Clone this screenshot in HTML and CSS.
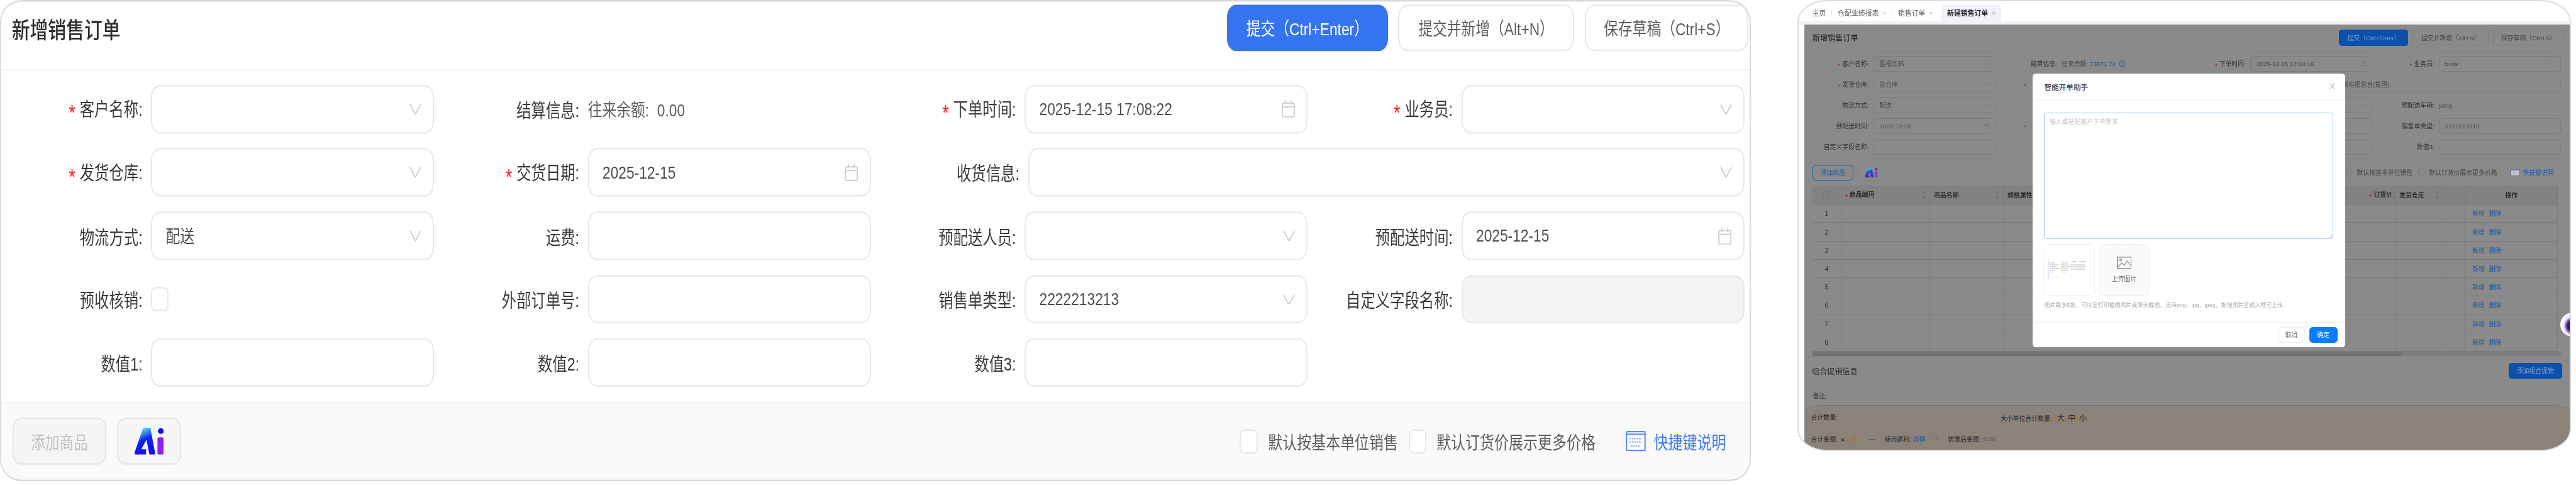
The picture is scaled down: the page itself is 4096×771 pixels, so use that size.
FILE: index.html
```html
<!DOCTYPE html>
<html lang="zh-CN">
<head>
<meta charset="utf-8">
<title>新增销售订单</title>
<link rel="stylesheet" href="styles.css">
</head>
<body>
<svg class="defs" width="0" height="0" aria-hidden="true">
  <defs>
    <symbol id="chev" viewBox="0 0 25 23" preserveAspectRatio="none"><path d="M1 1 12.5 22 24 1"/></symbol>
    <symbol id="cal" viewBox="0 0 28 38" preserveAspectRatio="none"><rect x="1.5" y="7" width="25" height="29" rx="2"/><path d="M1.5 15h25M8 1v9M20 1v9"/></symbol>
    <linearGradient id="aiA" x1="0.45" y1="0" x2="0.7" y2="0.75"><stop offset="0" stop-color="#56dcf2"/><stop offset="0.55" stop-color="#0a22f2"/><stop offset="1" stop-color="#1a12ee"/></linearGradient>
    <symbol id="ai" viewBox="0 0 61 57" preserveAspectRatio="none">
      <path fill="url(#aiA)" d="M18 0h15l10 53q.5 4-3 4h-6q-3 0-3.500-3L25 25 14 45h10v12H4q-4 0-4-4 0-2 1-4z"/>
      <circle cx="55" cy="7" r="6" fill="#1500f0"/>
      <rect x="48" y="20" width="13" height="37" rx="4" fill="#8a1ff0"/>
    </symbol>
    <symbol id="kbd" viewBox="0 0 42 42" preserveAspectRatio="none">
      <rect x="1.500" y="1.500" width="39" height="39" rx="2" fill="#fff" stroke="currentColor" stroke-width="3"/>
      <path d="M2 7h38" stroke="currentColor" stroke-width="3"/>
      <path d="M8 16h26M8 23h26M11 31h20" stroke="currentColor" stroke-width="3" stroke-dasharray="3 2" opacity=".75"/>
    </symbol>
    <symbol id="pic" viewBox="0 0 31 26"><rect x="1" y="1" width="29" height="24" fill="none" stroke="currentColor" stroke-width="2"/><circle cx="8" cy="7" r="2.200" fill="none" stroke="currentColor" stroke-width="1.500"/><path d="M2 22 10 13l5 5 7-9 8 10" fill="none" stroke="currentColor" stroke-width="1.500"/></symbol>
    <symbol id="sort" viewBox="0 0 8 18"><path d="M4 1 7 6H1zM4 17 1 12h6z" fill="currentColor"/></symbol>
  </defs>
</svg>

<div class="stage">

  <section class="panel">
    <header class="p-head">
      <h1 class="p-title">新增销售订单</h1>
      <div class="p-actions">
        <button class="btn btn-primary b1">提交（Ctrl+Enter）</button>
        <button class="btn b2">提交并新增（Alt+N）</button>
        <button class="btn b3">保存草稿（Ctrl+S）</button>
      </div>
    </header>

    <div class="p-form">
      <div class="field"><span class="label"><i class="req">*</i>客户名称:</span><div class="ctl"><svg class="chev"><use href="#chev"/></svg></div></div>
      <div class="field"><span class="label">结算信息:</span><span class="plain">往来余额:&nbsp; 0.00</span></div>
      <div class="field"><span class="label"><i class="req">*</i>下单时间:</span><div class="ctl"><span>2025-12-15 17:08:22</span><svg class="cal"><use href="#cal"/></svg></div></div>
      <div class="field"><span class="label"><i class="req">*</i>业务员:</span><div class="ctl"><svg class="chev"><use href="#chev"/></svg></div></div>

      <div class="field"><span class="label"><i class="req">*</i>发货仓库:</span><div class="ctl"><svg class="chev"><use href="#chev"/></svg></div></div>
      <div class="field"><span class="label"><i class="req">*</i>交货日期:</span><div class="ctl"><span>2025-12-15</span><svg class="cal"><use href="#cal"/></svg></div></div>
      <div class="field wide"><span class="label">收货信息:</span><div class="ctl"><svg class="chev"><use href="#chev"/></svg></div></div>

      <div class="field"><span class="label">物流方式:</span><div class="ctl"><span>配送</span><svg class="chev"><use href="#chev"/></svg></div></div>
      <div class="field"><span class="label">运费:</span><div class="ctl"></div></div>
      <div class="field"><span class="label">预配送人员:</span><div class="ctl"><svg class="chev"><use href="#chev"/></svg></div></div>
      <div class="field"><span class="label">预配送时间:</span><div class="ctl"><span>2025-12-15</span><svg class="cal"><use href="#cal"/></svg></div></div>

      <div class="field"><span class="label">预收核销:</span><span class="check"></span></div>
      <div class="field"><span class="label">外部订单号:</span><div class="ctl"></div></div>
      <div class="field"><span class="label">销售单类型:</span><div class="ctl"><span>2222213213</span><svg class="chev"><use href="#chev"/></svg></div></div>
      <div class="field"><span class="label">自定义字段名称:</span><div class="ctl off"></div></div>

      <div class="field"><span class="label">数值1:</span><div class="ctl"></div></div>
      <div class="field"><span class="label">数值2:</span><div class="ctl"></div></div>
      <div class="field"><span class="label">数值3:</span><div class="ctl"></div></div>
    </div>

    <footer class="p-foot">
      <button class="tool add" disabled>添加商品</button>
      <button class="tool ai"><svg class="ai-mark"><use href="#ai"/></svg></button>
      <div class="opts">
        <span class="check"></span><span class="opt o1">默认按基本单位销售</span>
        <span class="check"></span><span class="opt o2">默认订货价展示更多价格</span>
        <svg class="kbd"><use href="#kbd"/></svg><a class="keys">快捷键说明</a>
      </div>
    </footer>
  </section>

  <section class="shot">
    <nav class="tabs">
      <span class="tab t-home">主页</span><span class="tab-sep"></span>
      <span class="tab">仓配业绩报表<em>×</em></span><span class="tab-sep"></span>
      <span class="tab">销售订单<em>×</em></span>
      <span class="tab on">新建销售订单<em>×</em></span>
    </nav>
    <div class="tab-gap"></div>

    <div class="main">
      <header class="m-head">
        <h2>新增销售订单</h2>
        <div class="m-actions">
          <button class="mbtn prim">提交（Ctrl+Enter）</button>
          <button class="mbtn w2">提交并新增（Alt+N）</button>
          <button class="mbtn w3">保存草稿（Ctrl+S）</button>
        </div>
      </header>

      <div class="m-form">
        <div class="mf"><span class="ml"><i class="mreq">*</i>客户名称:</span><div class="mc"><span>葛根饮料</span><svg class="mchev"><use href="#chev"/></svg></div></div>
        <div class="mf"><span class="ml">结算信息:</span><span class="mplain">往来余额:&nbsp;<b class="mlink">73871.74</b><svg class="minfo" viewBox="0 0 14 14"><circle cx="7" cy="7" r="6" fill="none" stroke="currentColor" stroke-width="1.300"/><path d="M7 3.500v1.200M7 6v4.500" stroke="currentColor" stroke-width="1.300"/></svg></span></div>
        <div class="mf"><span class="ml"><i class="mreq">*</i>下单时间:</span><div class="mc"><span>2025-12-15 17:04:16</span><svg class="mcal"><use href="#cal"/></svg></div></div>
        <div class="mf"><span class="ml"><i class="mreq">*</i>业务员:</span><div class="mc"><span>boss</span><svg class="mchev"><use href="#chev"/></svg></div></div>

        <div class="mf"><span class="ml"><i class="mreq">*</i>发货仓库:</span><div class="mc"><span>总仓库</span><svg class="mchev"><use href="#chev"/></svg></div></div>
        <div class="mf"><span class="ml ml-star"><i class="mreq">*</i></span><div class="mc"></div></div>
        <div class="mf mwide"><span class="ml">收货信息:</span><div class="mc"><span>北京市朝阳区光华路1号中央广播电视总台(集团)</span><svg class="mchev"><use href="#chev"/></svg></div></div>

        <div class="mf"><span class="ml">物流方式:</span><div class="mc"><span>配送</span><svg class="mchev"><use href="#chev"/></svg></div></div>
        <div class="mf"><span class="ml"></span><div class="mc"></div></div>
        <div class="mf"><span class="ml">预配送人员:</span><div class="mc"><svg class="mchev"><use href="#chev"/></svg></div></div>
        <div class="mf"><span class="ml">预配送车辆:</span><span class="mplain">yang</span></div>

        <div class="mf"><span class="ml">预配送时间:</span><div class="mc"><span>2025-12-15</span><svg class="mcal"><use href="#cal"/></svg></div></div>
        <div class="mf"><span class="ml ml-star"><i class="mreq">*</i></span><div class="mc"></div></div>
        <div class="mf"><span class="ml">外部订单号:</span><div class="mc"></div></div>
        <div class="mf"><span class="ml">销售单类型:</span><div class="mc"><span>2222213213</span><svg class="mchev"><use href="#chev"/></svg></div></div>

        <div class="mf"><span class="ml">自定义字段名称:</span><div class="mc"></div></div>
        <div class="mf"><span class="ml"></span><div class="mc"></div></div>
        <div class="mf"><span class="ml">数值2:</span><div class="mc"></div></div>
        <div class="mf"><span class="ml">数值3:</span><div class="mc"></div></div>
      </div>

      <div class="m-tools">
        <button class="madd">添加商品</button>
        <button class="mai"><svg class="mai-mark"><use href="#ai"/></svg></button>
        <div class="mopts">
          <span class="mcheck"></span><span class="mo o3">默认按基本单位销售</span>
          <span class="mcheck"></span><span class="mo o4">默认订货价展示更多价格</span>
          <svg class="mkbd"><use href="#kbd"/></svg><a class="mkeys">快捷键说明</a>
        </div>
      </div>

      <table class="grid">
        <colgroup>
          <col class="w60"><col class="w186"><col class="w154"><col class="w104"><col class="w102"><col class="w105"><col class="w101"><col class="w101"><col class="w123"><col class="w185"><col class="w100"><col class="w47"><col class="w193">
        </colgroup>
        <thead>
          <tr>
            <th class="num"><svg class="gear" viewBox="0 0 16 22"><path d="M8 1 15 5v12l-7 4-7-4V5z" fill="none" stroke="currentColor" stroke-width="1.400"/><circle cx="8" cy="11" r="3" fill="none" stroke="currentColor" stroke-width="1.400"/></svg></th>
            <th><span class="th"><span><i class="mreq">*</i>商品编码</span><svg class="sort"><use href="#sort"/></svg></span></th>
            <th><span class="th"><span>商品名称</span><svg class="sort"><use href="#sort"/></svg></span></th>
            <th><span class="th"><span>规格属性</span></span></th>
            <th></th><th></th><th></th><th></th><th></th>
            <th class="r"><span class="th"><span><i class="mreq">*</i>订货价</span><svg class="sort"><use href="#sort"/></svg></span></th>
            <th><span class="th"><span>发货仓库</span><svg class="sort"><use href="#sort"/></svg></span></th>
            <th class="fx-l"></th>
            <th class="fx center">操作</th>
          </tr>
        </thead>
        <tbody>
          <tr><td class="num">1</td><td></td><td></td><td></td><td></td><td></td><td></td><td></td><td></td><td></td><td></td><td></td><td class="fx ops"><a>新增</a><a>删除</a></td></tr>
          <tr><td class="num">2</td><td></td><td></td><td></td><td></td><td></td><td></td><td></td><td></td><td></td><td></td><td></td><td class="fx ops"><a>新增</a><a>删除</a></td></tr>
          <tr><td class="num">3</td><td></td><td></td><td></td><td></td><td></td><td></td><td></td><td></td><td></td><td></td><td></td><td class="fx ops"><a>新增</a><a>删除</a></td></tr>
          <tr><td class="num">4</td><td></td><td></td><td></td><td></td><td></td><td></td><td></td><td></td><td></td><td></td><td></td><td class="fx ops"><a>新增</a><a>删除</a></td></tr>
          <tr><td class="num">5</td><td></td><td></td><td></td><td></td><td></td><td></td><td></td><td></td><td></td><td></td><td></td><td class="fx ops"><a>新增</a><a>删除</a></td></tr>
          <tr><td class="num">6</td><td></td><td></td><td></td><td></td><td></td><td></td><td></td><td></td><td></td><td></td><td></td><td class="fx ops"><a>新增</a><a>删除</a></td></tr>
          <tr><td class="num">7</td><td></td><td></td><td></td><td></td><td></td><td></td><td></td><td></td><td></td><td></td><td></td><td class="fx ops"><a>新增</a><a>删除</a></td></tr>
          <tr><td class="num">8</td><td></td><td></td><td></td><td></td><td></td><td></td><td></td><td></td><td></td><td></td><td></td><td class="fx ops"><a>新增</a><a>删除</a></td></tr>
        </tbody>
      </table>
      <div class="hscroll"><div class="hthumb"></div></div>

      <div class="promo">
        <div class="promo-row"><h3>组合促销信息</h3><button class="mbtn prim pw">添加组合促销</button></div>
        <div class="remark">备注:</div>
        <div class="remark-box"></div>
      </div>

      <footer class="sum">
        <div class="sum-row r1"><span class="s-total">合计数量:</span><span>大小单位合计数量:&nbsp;<b class="org">0</b><span class="big">大</span><b class="org">0</b><span class="big">中</span><b class="org">0</b><span class="big">小</span></span></div>
        <div class="sum-row r2">
          <span class="sg">合计金额:&nbsp; ¥<b class="org big">0.00</b></span>
          <span class="op">—</span>
          <span class="sg">使用返利:&nbsp;<a class="mlink">选择</a></span>
          <span class="op">=</span>
          <span class="sg">优惠后金额:&nbsp;<em class="after">0.00</em></span>
        </div>
      </footer>
    </div>

    <div class="ball"></div>

    <div class="dialog">
      <div class="d-head"><span class="d-title">智能开单助手</span><svg class="d-x" viewBox="0 0 12 14"><path d="M1 1 11 13M11 1 1 13" fill="none" stroke="currentColor" stroke-width="1.100"/></svg></div>
      <div class="d-body">
        <div class="d-text"><span>输入或粘贴客户下单需求</span><svg class="d-grip" viewBox="0 0 8 8"><path d="M8 1 1 8M8 5 5 8" stroke="currentColor" fill="none"/></svg></div>
        <div class="d-thumbs">
          <div class="thumb">
            <svg class="mini" viewBox="0 0 84 38">
              <rect x="0" y="0" width="2" height="37" fill="#c9d9ee"/>
              <path d="M4 4h12M4 8h18M4 12h14M4 16h20M4 19h10M4 23h8M28 4h14M28 8h16M28 12h18M28 16h14M28 19h16M30 23h8M50 1h10M48 8h30M48 12h30M48 17h30M66 1h14" stroke="#a8a8a8" stroke-width="1.400" stroke-dasharray="3 1" fill="none"/>
            </svg>
          </div>
          <div class="upload"><svg class="pic"><use href="#pic"/></svg><span>上传图片</span></div>
        </div>
        <p class="d-hint">图片最多5张，可以是打印截图照片或聊天截图。支持png、jpg、jpeg，拖拽图片至输入框可上传</p>
      </div>
      <div class="d-foot"><button class="d-btn">取消</button><button class="d-btn ok">确定</button></div>
    </div>
  </section>
</div>
</body>
</html>
```

FILE: styles.css
```css
* { box-sizing: border-box; }
html, body { margin: 0; padding: 0; background: #fff; overflow: hidden; }
body { font-family: "Liberation Sans", "Noto Sans CJK SC", sans-serif; }
button { font-family: inherit; padding: 0; margin: 0; }
h1, h2, h3, p { margin: 0; }
i, em { font-style: normal; }
.defs { position: absolute; }

.stage { zoom: 0.759; width: 5396px; height: 1016px; display: flex; align-items: flex-start; overflow: hidden; }

/* left: the form, stretched vertically like the source image */
.panel {
  flex: none; width: 3668px; height: 806px;
  transform: scaleY(1.25); transform-origin: 0 0;
  filter: blur(.5px);
  border: 3px solid #dadada; border-radius: 46px / 36px;
  display: flex; flex-direction: column; overflow: hidden; background: #fff;
}
.p-head { flex: none; height: 114px; border-bottom: 2px solid #f1f1f1; display: flex; justify-content: space-between; padding: 5px 2px 0 22px; }
.p-title { font-size: 38px; line-height: 46px; font-weight: 500; color: #2e2e2e; margin-top: 22px; }
.p-actions { display: flex; gap: 23px; }
.btn { height: 78px; border: 3px solid #e6e8ec; border-radius: 20px; background: #fff; color: #5e5e5e; font-size: 30px; white-space: nowrap; }
.btn-primary { background: #3574f0; border-color: #3574f0; color: #fff; }
.b1 { width: 337px; margin-right: -1px; }
.b2 { width: 368px; }
.b3 { width: 343px; }

.p-form { flex: 1; display: grid; grid-template-columns: repeat(4, 907px); column-gap: 8px; row-gap: 24.6px; grid-auto-rows: 81.6px; padding-top: 25.4px; align-content: start; }
.field { display: flex; align-items: center; gap: 18px; color: #444; font-size: 30px; min-width: 0; }
.label { flex: none; width: 296px; text-align: right; white-space: nowrap; color: #3a3a3a; font-size: 30.800px; }
.req { color: #f5222d; font-family: "Liberation Sans", sans-serif; font-size: 36px; line-height: 1; margin-right: 9px; vertical-align: -8px; }
.plain { color: #5e5e5e; white-space: nowrap; }
.ctl { flex: 1; height: 100%; border: 3px solid #e7e9ed; border-radius: 20px; background: #fff; display: flex; align-items: center; justify-content: space-between; padding: 0 24px 0 28px; color: #4f4f4f; white-space: nowrap; }
.ctl svg { margin-left: auto; flex: none; }
.off { background: #f4f4f4; }
.wide { grid-column: span 2; }
.wide .label { width: 303px; }
.chev { width: 25px; height: 18.4px; fill: none; stroke: #c4c4c4; stroke-width: 2px; }
.cal { width: 28px; height: 30px; fill: none; stroke: #cfcfcf; stroke-width: 2.500px; }
.check { flex: none; width: 37px; height: 41px; border: 3px solid #e7e9ed; border-radius: 10px; background: #fff; }

.p-foot { flex: none; height: 129.4px; border-top: 2.500px solid #e1e1e1; background: #fafafa; padding: 24px 49px 0 24px; display: flex; align-items: flex-start; gap: 22px; }
.tool { flex: none; height: 80px; border: 3px solid #e6e6e8; border-radius: 18px; background: #f5f5f5; color: #c2c2c2; font-size: 30px; }
.add { width: 196px; }
.ai { width: 135px; display: flex; align-items: center; justify-content: center; }
.ai-mark { width: 61px; height: 45.6px; }
.opts { margin-left: auto; height: 80px; display: flex; align-items: center; font-size: 30.300px; color: #5e5e5e; white-space: nowrap; }
.o1 { margin: 0 24px 0 22px; width: 271px; }
.o2 { margin: 0 61px 0 21px; width: 336px; }
.kbd { width: 42px; height: 34px; color: #5a90f2; flex: none; margin-right: 16px; }
.keys { color: #4178f2; width: 152px; }

/* right: the screenshot of the same page behind a modal */
.shot {
  flex: none; width: 1620px; height: 945px; margin-left: 98px; position: relative;
  border: 3px solid #dcdcdc; border-radius: 62px / 46px; overflow: hidden; background: #fff;
  font-size: 13px; color: #333; filter: blur(.5px);
}
.tabs { height: 41px; display: flex; align-items: flex-end; padding-left: 28px; color: #5e5e5e; font-size: 14.300px; white-space: nowrap; }
.tab { height: 34px; display: flex; align-items: center; }
.tab em { color: #bbb; margin-left: 8px; font-size: 13px; }
.tab-sep { width: 1px; height: 14px; background: #e5e5e5; margin: 0 12px 10px; }
.tab.on { background: #f0f2f7; color: #2e2e2e; font-weight: 700; padding: 0 12px; margin-left: 18px; border-radius: 8px 8px 0 0; }
.tab-gap { height: 8px; background: #f0f2f7; }

.main { height: 890px; margin-left: 11px; background: #8a8a8a; display: flex; flex-direction: column; border-left: 1px solid #8f8f8f; }
.m-head { flex: none; height: 56px; border-bottom: 1px solid #828282; display: flex; justify-content: space-between; align-items: center; padding: 0 12px 0 16px; }
.m-head h2 { font-size: 16px; font-weight: 500; color: #2a2a2a; }
.m-actions { display: flex; gap: 9px; }
.mbtn { height: 33px; width: 149px; border: 1px solid #7d7d7d; border-radius: 6px; background: #8a8a8a; color: #444; font-size: 13px; white-space: nowrap; }
.mbtn.prim { width: 145px; height: 34px; background: #0a50ac; border-color: #0a50ac; color: #7c9fd2; }
.mbtn.w2 { width: 159px; }
.mbtn.pw { width: 112px; height: 33px; }

.m-form { flex: none; display: grid; grid-template-columns: repeat(4, 392px); column-gap: 3px; grid-auto-rows: 32px; row-gap: 11.500px; padding: 10px 0 9px 7px; border-bottom: 1px solid #828282; }
.mf { display: flex; align-items: center; gap: 9px; min-width: 0; white-space: nowrap; }
.ml { flex: none; width: 127px; text-align: right; color: #333; }
.ml-star { padding-right: 61px; }
.mreq { color: #a32020; margin-right: 4px; font-style: normal; vertical-align: -2px; }
.mplain { color: #484848; display: flex; align-items: center; }
.mlink { color: #1c5aa8; font-weight: 400; }
.minfo { width: 14px; height: 14px; margin-left: 6px; color: #1c5aa8; }
.mc { flex: 1; height: 100%; border: 1px solid #7c7c7c; border-radius: 8px; display: flex; align-items: center; padding: 0 12px; color: #4a4a4a; overflow: hidden; }
.mc svg { margin-left: auto; flex: none; }
.mwide { grid-column: span 2; }
.mwide .ml { width: 130px; }
.mchev { width: 10px; height: 8px; fill: none; stroke: #727272; stroke-width: 2px; }
.mcal { width: 11px; height: 11px; fill: none; stroke: #727272; stroke-width: 2.500px; }

.m-tools { flex: none; height: 55px; padding: 11px 32px 0 16px; display: flex; gap: 8px; align-items: flex-start; }
.madd { width: 86px; height: 33px; border: 1px solid #1a5fb0; border-radius: 8px; background: none; color: #1c5aa8; font-size: 13px; }
.mai { width: 59px; height: 33px; border: 1px solid #7e7e7e; border-radius: 8px; background: none; display: flex; align-items: center; justify-content: center; }
.mai-mark { width: 27px; height: 20px; opacity: .75; }
.mopts { margin-left: auto; height: 33px; display: flex; align-items: center; white-space: nowrap; color: #444; }
.mcheck { width: 13px; height: 14px; border: 1px solid #7e7e7e; border-radius: 3px; flex: none; }
.mo { margin-left: 10px; }
.o3 { width: 118px; margin-right: 10px; }
.o4 { width: 146px; margin-right: 25px; }
.mkbd { width: 20px; height: 14px; color: #1c5aa8; opacity: .6; margin-right: 6px; flex: none; }
.mkeys { color: #1c5aa8; width: 66px; }

.grid { flex: none; table-layout: fixed; border-collapse: collapse; width: 1561px; margin-left: 16px; }
.w60 { width: 60px; } .w186 { width: 186px; } .w154 { width: 154px; } .w104 { width: 104px; } .w102 { width: 102px; }
.w105 { width: 105px; } .w101 { width: 101px; } .w123 { width: 123px; } .w185 { width: 185px; } .w100 { width: 100px; }
.w47 { width: 47px; } .w193 { width: 193px; }
.grid th { height: 39px; background: #828282; border-right: 1px solid #7a7a7a; border-bottom: 1px solid #727272; font-size: 13px; font-weight: 700; color: #2c2c2c; text-align: left; padding: 0 8px; white-space: nowrap; }
.grid td { height: 38.500px; border-right: 1px solid #7d7d7d; border-bottom: 1px solid #7a7a7a; padding: 0; }
.grid .num { text-align: center; padding: 0; color: #333; font-size: 14px; }
.th { display: flex; justify-content: space-between; align-items: center; }
.r .th { padding-left: 122px; }
.gear { width: 14px; height: 22px; color: #757575; vertical-align: middle; }
.sort { width: 8px; height: 18px; color: #727272; flex: none; }
.grid .fx { border-left: 2px solid #767676; }
.grid .center { text-align: center; }
.grid .ops { padding-left: 14px; color: #1c5aa8; white-space: nowrap; }
.ops a { margin-right: 9px; }

.hscroll { flex: none; height: 9px; width: 1568px; margin-left: 16px; background: #7d7d7d; }
.hthumb { width: 1233px; height: 100%; background: #727272; }

.promo { flex: 1; min-height: 0; border-top: 1px solid #828282; padding: 13px 16px 0 15px; overflow: hidden; }
.promo-row { display: flex; justify-content: space-between; align-items: center; }
.promo-row h3 { font-size: 16px; font-weight: 400; color: #2e2e2e; }
.remark { margin: 28px 0 0 2px; line-height: 18px; color: #333; }
.remark-box { height: 20px; margin: 10px 4px 0 5px; border: 1px solid #777; border-radius: 5px 5px 0 0; }

.sum { flex: none; height: 89px; background: #8b827a; padding-left: 13px; color: #262626; }
.sum-row { display: flex; align-items: center; white-space: nowrap; }
.r1 { height: 44px; border-bottom: 1px solid #877e76; margin-left: -13px; padding-left: 13px; }
.r2 { height: 45px; gap: 20px; }
.s-total { width: 397px; }
.sg { display: flex; align-items: center; }
.org { color: #a87c17; font-weight: 400; }
.big { font-size: 16px; }
.op { font-size: 13px; color: #3a3a3a; }
.after { color: #5a5a5a; margin-left: 2px; }

.ball { position: absolute; left: 1595px; top: 652px; width: 50px; height: 50px; border-radius: 50%; background: radial-gradient(circle at 55% 55%, #1f1f3d 0 30%, #7a3fb0 38%, #f3e9ff 52%, #fff 70%, #d8c6ff 100%); }

.dialog { position: absolute; left: 489px; top: 151px; width: 656px; height: 574px; background: #fff; border-radius: 7px; display: flex; flex-direction: column; color: #333; }
.d-head { flex: none; height: 57px; border-bottom: 1px solid #f3f3f3; display: flex; align-items: center; justify-content: space-between; padding: 0 21px 0 25px; }
.d-title { font-size: 15.300px; color: #3a3a3a; font-weight: 500; }
.d-x { width: 12px; height: 14px; color: #888; }
.d-body { flex: 1; padding: 25px 25px 0; }
.d-text { height: 265px; border: 2px solid #8fc8fb; border-radius: 6px; padding: 8px 10px; color: #c4c4c4; font-size: 13px; position: relative; }
.d-grip { position: absolute; right: 1px; bottom: 1px; width: 8px; height: 8px; color: #aaa; }
.d-thumbs { display: flex; gap: 8px; margin-top: 11px; }
.thumb { width: 106px; height: 108px; border: 2px solid #f0f0f0; border-radius: 7px; padding: 34px 0 0 6px; }
.mini { width: 84px; height: 38px; display: block; }
.upload { width: 107px; height: 108px; border: 1px dashed #e8e8e8; border-radius: 7px; background: #fafafa; display: flex; flex-direction: column; align-items: center; padding-top: 25px; color: #666; font-size: 13px; gap: 11px; }
.pic { width: 31px; height: 26px; color: #8a8a8a; }
.d-hint { margin-top: 11px; font-size: 11.800px; line-height: 18px; color: #aaa; white-space: nowrap; }
.d-foot { flex: none; height: 53px; border-top: 1px solid #f3f3f3; display: flex; justify-content: flex-end; align-items: flex-start; gap: 9px; padding: 9px 17px 0 0; }
.d-btn { width: 57px; height: 33px; border: 1px solid #eaeaea; border-radius: 7px; background: #fff; color: #666; font-size: 13px; }
.d-btn.ok { width: 59px; background: #0a7cff; border-color: #0a7cff; color: #fff; }
```
